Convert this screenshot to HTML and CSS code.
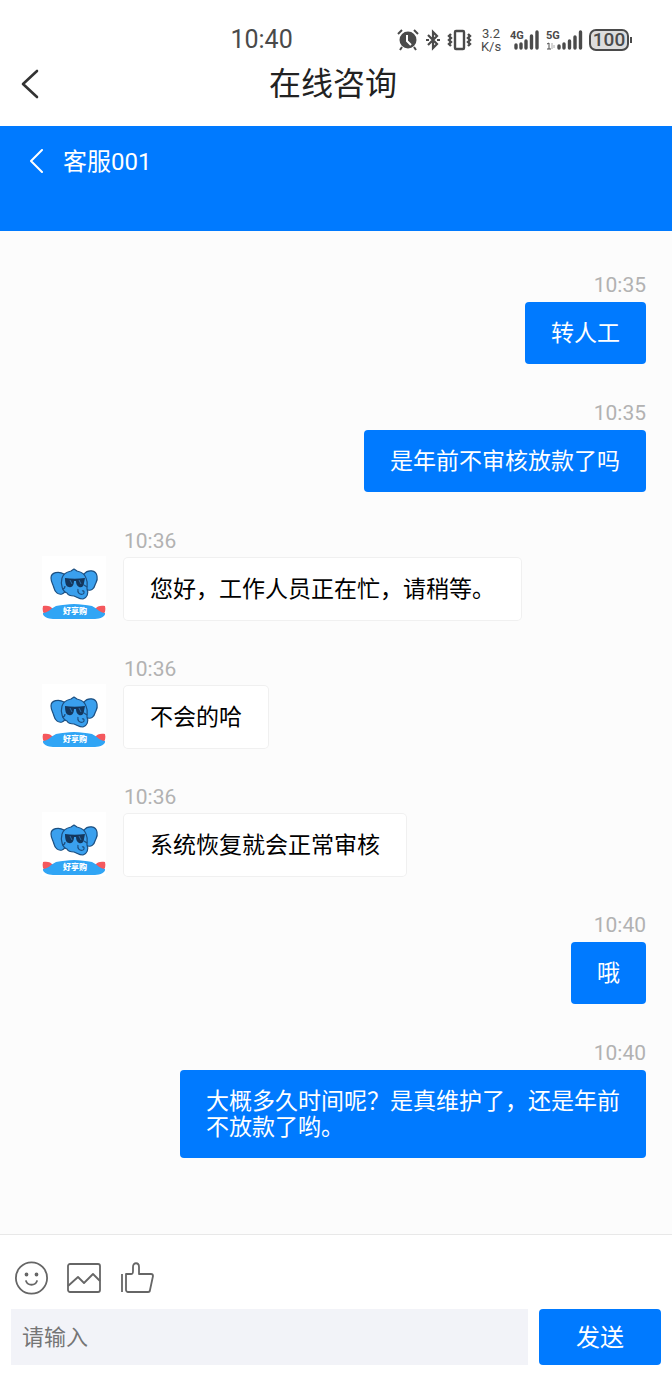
FILE: index.html
```html
<!DOCTYPE html>
<html lang="zh-CN">
<head>
<meta charset="utf-8">
<meta name="viewport" content="width=device-width, initial-scale=1">
<title>在线咨询</title>
<link rel="stylesheet" href="styles.css">
</head>
<body>
<svg class="defs" aria-hidden="true">
  <symbol id="elephant" viewBox="0 0 64 64">
    <rect width="64" height="64" fill="#fff"/>
    <g fill="#3aa0ee" stroke="#1c4f80" stroke-width="1.200" stroke-linejoin="round">
      <path d="M22 18C17 15 9 16 9 22c0 4 2 6 3 10 1 4 4 7 8 6 3-1 4-4 4-7z"/>
      <path d="M42 18c4-5 12-4 13 2 1 5-1 6-2 9-1 4-4 6-7 5-3-1-5-3-5-6z"/>
      <path d="M20 22c1-4 5-6 9-7l3-2 3 2c4 1 8 3 9 7 2 4 1 8 1 11 2 4 0 9-4 10-4 0-6-2-9-3-3 0-6-1-7-3-4-1-7-8-5-15z"/>
      <path d="M36 33c-1 4 2 6 5 5 2-1 1-4-1-3" fill="none"/>
      <path d="M20 33c2 0 3-1 3-3M45 31l-3-2" fill="none"/>
    </g>
    <path d="M23 22c6 1 13 1 20 0l-1 5c0 3-2 5-5 4-2-1-3-3-3-6h-2c0 4-2 7-5 6-3 0-4-4-4-9z" fill="#14365c"/>
    <path d="M28 24l2 4M37 24l2 4" stroke="#2a70ad"/>
    <path d="M1 50c4-1 8 0 10 3l-8 6c-2-2-3-5-2-9zM63 50c-4-1-8 0-10 3l8 6c2-2 3-5 2-9z" fill="#f4585d"/>
    <path d="M1 57c5 0 7-4 13-7 6-1 12-2 18-2s12 1 18 2c6 3 8 7 13 7 1 3-5 6-10 6H11c-5 0-11-3-10-6z" fill="#30a5f5"/>
  </symbol>
</svg>
<div class="app">
  <header class="top">
    <div class="status">
      <span class="clock">10:40</span>
      <div class="status-icons">
        <svg width="22" height="24" viewBox="0 0 22 24">
          <circle cx="11" cy="12" r="8.500" fill="#4a4a4a"/>
          <path d="M1 6l4-4M21 6l-4-4M5 19l-2 3M17 19l2 3" stroke="#4a4a4a" stroke-width="2"/>
          <path d="M10 7v6l4 4" fill="none" stroke="#fff" stroke-width="2"/>
        </svg>
        <svg width="16" height="24" viewBox="0 0 16 24" fill="none" stroke="#4a4a4a" stroke-width="2.200">
          <path d="M3 7l9 9-4 4V4l4 4-9 9"/>
          <path d="M1 12h3M12 12h3"/>
        </svg>
        <svg width="25" height="24" viewBox="0 0 25 24" fill="none" stroke="#4a4a4a" stroke-width="2.400">
          <rect x="8" y="3" width="9" height="18" rx="1"/>
          <path d="M4 6L2 8l2 2-2 2 2 2-2 2 2 2M21 6l2 2-2 2 2 2-2 2 2 2-2 2"/>
        </svg>
        <span class="speed"><span>3.2</span><span>K/s</span></span>
        <svg class="signal" width="30" height="24" viewBox="0 0 30 24">
          <text x="0" y="11">4G</text>
          <path d="M6 20v-3M11 20v-4M16 20v-7M21.500 20V8M27 20V4" stroke="#4a4a4a" stroke-width="3.400" stroke-linecap="round"/>
        </svg>
        <svg class="signal" width="37" height="24" viewBox="0 0 37 24">
          <text x="0" y="11">5G</text>
          <path d="M1 16l2-1v6M1 21h4" stroke="#4a4a4a" fill="none"/>
          <path d="M6 15v6M8 17v3" stroke="#aaa"/>
          <path d="M13 20v-2M18 20v-4M23.500 20v-7M29 20V9M34.500 20V4" stroke="#4a4a4a" stroke-width="3.400" stroke-linecap="round"/>
        </svg>
        <span class="battery">100</span>
      </div>
    </div>
    <div class="title-row">
      <button class="back" aria-label="返回"><svg width="18" height="30" viewBox="0 0 18 30" fill="none" stroke="#333" stroke-width="2.600" stroke-linecap="round" stroke-linejoin="round"><path d="M16 2L2 15l14 13"/></svg></button>
      <h1>在线咨询</h1>
    </div>
  </header>
  <div class="agent">
    <button class="agent-back" aria-label="返回"><svg width="14" height="24" viewBox="0 0 14 24" fill="none" stroke="#fff" stroke-width="2" stroke-linecap="round" stroke-linejoin="round"><path d="M12 1L1 12l11 11"/></svg></button>
    <h2>客服001</h2>
  </div>
  <main class="chat">
    <div class="msg mine"><time>10:35</time><p class="bubble">转人工</p></div>
    <div class="msg mine"><time>10:35</time><p class="bubble">是年前不审核放款了吗</p></div>
    <div class="msg theirs"><svg class="avatar" viewBox="0 0 64 64"><use href="#elephant"/><text x="33" y="58">好享购</text></svg><div class="body"><time>10:36</time><p class="bubble">您好，工作人员正在忙，请稍等。</p></div></div>
    <div class="msg theirs"><svg class="avatar" viewBox="0 0 64 64"><use href="#elephant"/><text x="33" y="58">好享购</text></svg><div class="body"><time>10:36</time><p class="bubble">不会的哈</p></div></div>
    <div class="msg theirs"><svg class="avatar" viewBox="0 0 64 64"><use href="#elephant"/><text x="33" y="58">好享购</text></svg><div class="body"><time>10:36</time><p class="bubble">系统恢复就会正常审核</p></div></div>
    <div class="msg mine"><time>10:40</time><p class="bubble">哦</p></div>
    <div class="msg mine"><time>10:40</time><p class="bubble">大概多久时间呢？是真维护了，还是年前不放款了哟。</p></div>
  </main>
  <form class="composer">
    <div class="tools">
      <button type="button" aria-label="表情"><svg width="34" height="34" viewBox="0 0 34 34" fill="none" stroke="#666" stroke-width="1.800" stroke-linecap="round"><circle cx="17.500" cy="17" r="15.600"/><path d="M12 20c2 5 9 5 11 0"/><circle cx="12.500" cy="13.500" r="1" fill="#666"/><circle cx="22.500" cy="13.500" r="1" fill="#666"/></svg></button>
      <button type="button" aria-label="图片"><svg width="34" height="34" viewBox="0 0 34 34" fill="none" stroke="#666" stroke-width="1.800" stroke-linejoin="round"><rect x="1" y="3" width="32" height="28" rx="2"/><path d="M1 25l10-9 6 6 9-9 7 7"/></svg></button>
      <button type="button" aria-label="点赞"><svg width="34" height="34" viewBox="0 0 34 34" fill="none" stroke="#666" stroke-width="1.800" stroke-linejoin="round"><path d="M2 13v18M6 13h5c2 0 2-1 2-3V6c0-5 6-5 6 0v7h12c1.500 0 2 1 2 2l-3 14c0 1-1 2-2 2H8c-1 0-2-1-2-2z"/></svg></button>
    </div>
    <div class="entry">
      <input type="text" placeholder="请输入" aria-label="请输入">
      <button type="button" class="send">发送</button>
    </div>
  </form>
</div>
</body>
</html>
```
FILE: styles.css
```css
* { box-sizing: border-box; margin: 0; padding: 0; }

body {
  font-family: Roboto, "Noto Sans CJK SC", sans-serif;
  background: #fff;
  color: #000;
}

button { border: 0; background: none; font: inherit; cursor: pointer; }
svg { display: block; flex: none; }
.defs { position: absolute; width: 0; height: 0; }

.app { display: flex; flex-direction: column; min-height: 100vh; }

.top { padding: 24px 0 15px; }
.status {
  display: flex;
  align-items: center;
  justify-content: space-between;
  height: 32px;
  padding: 0 43px 0 34%;
  color: #4a4a4a;
}
.clock { padding-left: 2px; font-size: 25px; line-height: 32px; }
.status-icons { display: flex; align-items: center; gap: 6px; }
.speed {
  display: flex;
  flex-direction: column;
  align-items: center;
  width: 26px;
  font-size: 13px;
  line-height: 13px;
}
.signal text { font: bold 11px Roboto, sans-serif; fill: #4a4a4a; }
.battery {
  position: relative;
  width: 40px;
  border: 2px solid #4a4a4a;
  border-radius: 7px;
  background: #ddd;
  font-size: 19px;
  font-weight: 500;
  line-height: 18px;
  text-align: center;
}
.battery::after {
  content: "";
  position: absolute;
  top: 6px;
  right: -5px;
  width: 2px;
  height: 6px;
  background: #4a4a4a;
}

.title-row {
  display: grid;
  grid-template-columns: 58px 1fr 64px;
  align-items: center;
  height: 55px;
}
.back { padding-left: 21px; }
h1 { font-size: 32px; font-weight: 400; line-height: 48px; text-align: center; color: #222; }

.agent {
  display: flex;
  align-items: flex-start;
  gap: 19px;
  min-height: 105px;
  padding: 18px 30px;
  background: #007aff;
  color: #fff;
}
.agent-back { padding: 5px 0; }
h2 { font-size: 24px; font-weight: 400; line-height: 36px; }

.chat {
  flex: 1;
  display: flex;
  flex-direction: column;
  gap: 34px;
  padding: 39px 26px 40px 42px;
  background: #fcfcfc;
}
.msg { display: flex; }
.mine { flex-direction: column; align-items: flex-end; gap: 3px; }
.theirs { align-items: flex-end; gap: 18px; }
.body { display: flex; flex-direction: column; align-items: flex-start; gap: 3px; }
time { padding-top: 1px; font-size: 21px; line-height: 28px; color: #b2b2b2; }
.avatar { width: 64px; height: 64px; }
.avatar text {
  font: 900 8px "Noto Sans CJK SC", sans-serif;
  fill: #fff;
  text-anchor: middle;
}
.bubble {
  max-width: 466px;
  padding: 19px 26px 17px;
  border-radius: 4px;
  font-size: 23px;
  line-height: 26px;
}
.mine .bubble { background: #007aff; color: #fff; }
.theirs .bubble { background: #fff; box-shadow: 0 0 0 1px #f0f0f0; }

.composer { padding: 26px 11px 21px; border-top: 1px solid #e8e8e8; background: #fff; }
.tools { display: flex; gap: 19px; padding: 0 3px 14px; }
.entry { display: flex; gap: 11px; }
.entry input {
  flex: 1;
  min-width: 0;
  height: 56px;
  padding: 0 11px;
  border: 0;
  background: #f2f3f8;
  font: inherit;
  font-size: 22px;
}
.entry input::placeholder { color: #757575; opacity: 1; }
.send {
  width: 122px;
  padding-bottom: 3px;
  border-radius: 4px;
  background: #007aff;
  color: #fff;
  font-size: 24px;
}
```
